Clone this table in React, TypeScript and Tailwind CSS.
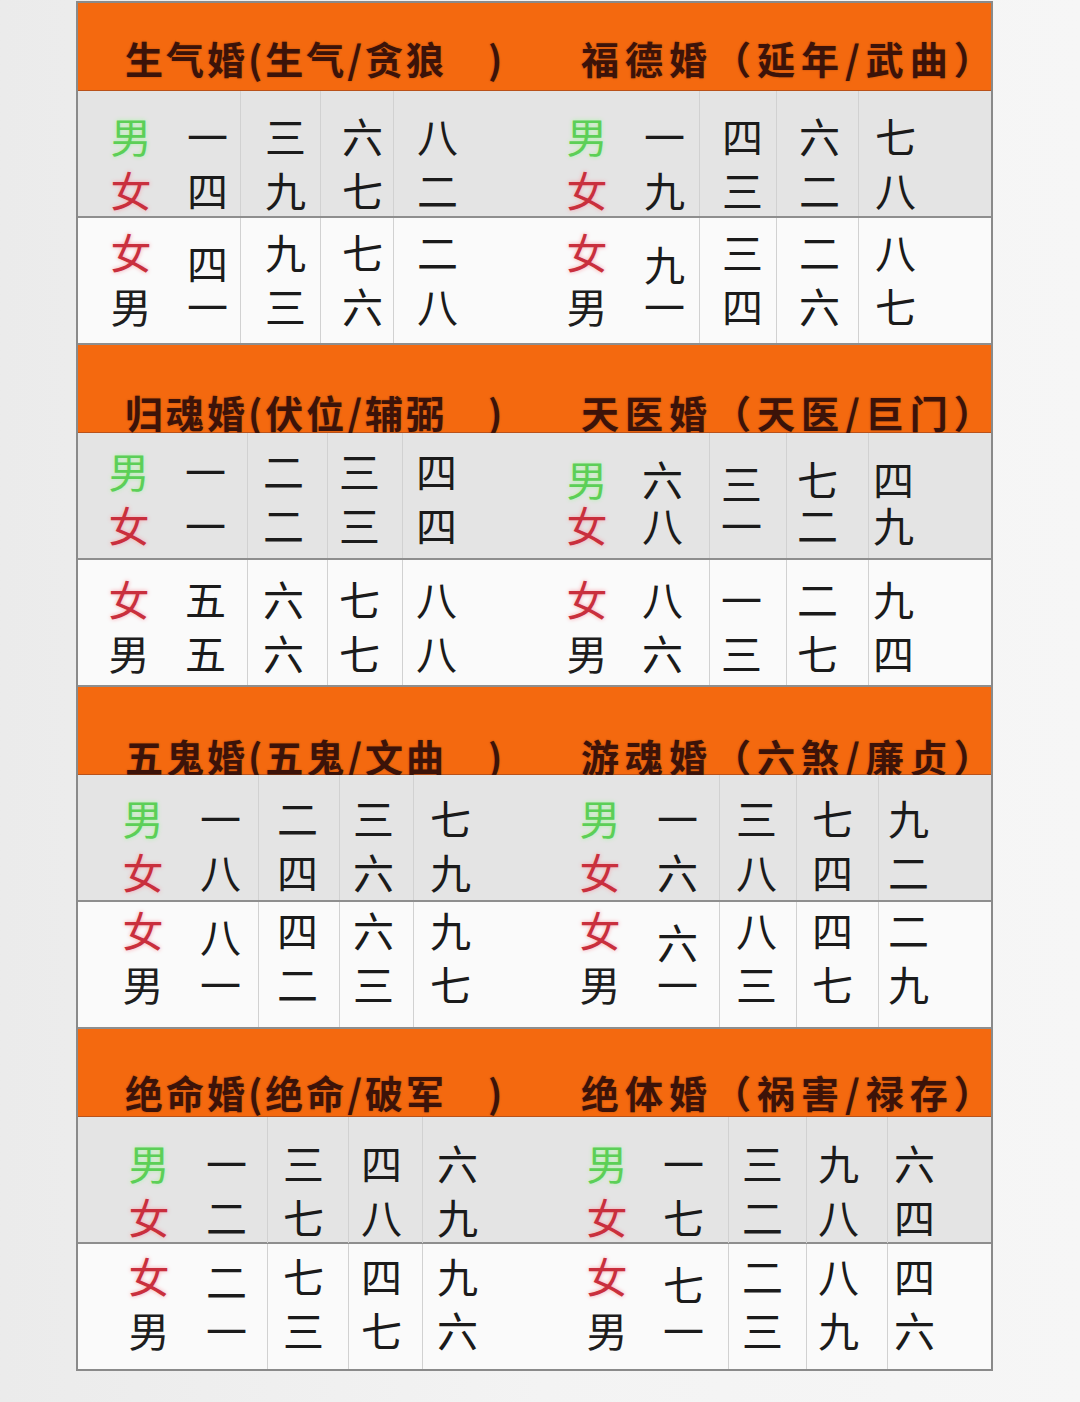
import React from "react";

type RowData = {
  pt: string;
  L: [string, string];
  R: [string, string];
  shift: Record<string, string>;
};

type Section = {
  left: string;
  right: string;
  headPt: string;
  grid: string;
  pl: string[];
  gray: RowData;
  white: RowData;
};

const SECTIONS: Section[] = [
  {
    left: "生气婚(生气/贪狼　)",
    right: "福德婚（延年/武曲）",
    headPt: "pt-[36px]",
    grid: "grid-cols-[28px_50px_84px_80px_73px_169px_50px_87px_77px_82px_1fr]",
    pl: ["pl-[31px]", "pl-[24px]", "pl-[21px]", "pl-[23px]", "pl-[32px]", "pl-[22px]", "pl-[22px]", "pl-[16px]"],
    gray: { pt: "pt-[17px]", L: ["男一三六八", "女四九七二"], R: ["男一四六七", "女九三二八"], shift: {} },
    white: {
      pt: "pt-[6px]",
      L: ["女四九七二", "男一三六八"],
      R: ["女九三二八", "男一四六七"],
      shift: { L1: "translate-y-[11px]", R1: "translate-y-[12px]" },
    },
  },
  {
    left: "归魂婚(伏位/辅弼　)",
    right: "天医婚（天医/巨门）",
    headPt: "pt-[48px]",
    grid: "grid-cols-[26px_50px_93px_80px_75px_160px_50px_97px_77px_82px_1fr]",
    pl: ["pl-[31px]", "pl-[15px]", "pl-[11px]", "pl-[13px]", "pl-[30px]", "pl-[11px]", "pl-[10px]", "pl-[4px]"],
    gray: {
      pt: "pt-[10px]",
      L: ["男一二三四", "女一二三四"],
      R: ["男六三七四", "女八一二九"],
      shift: {
        R0: "translate-y-[8px]",
        R1: "translate-y-[8px]",
        R2: "translate-y-[12px]",
        R3: "translate-y-[8px]",
        R4: "translate-y-[8px]",
      },
    },
    white: { pt: "pt-[11px]", L: ["女五六七八", "男五六七八"], R: ["女八一二九", "男六三七四"], shift: {} },
  },
  {
    left: "五鬼婚(五鬼/文曲　)",
    right: "游魂婚（六煞/廉贞）",
    headPt: "pt-[50px]",
    grid: "grid-cols-[40px_50px_90px_81px_74px_162px_50px_94px_77px_82px_1fr]",
    pl: ["pl-[32px]", "pl-[18px]", "pl-[13px]", "pl-[16px]", "pl-[32px]", "pl-[16px]", "pl-[15px]", "pl-[9px]"],
    gray: { pt: "pt-[15px]", L: ["男一二三七", "女八四六九"], R: ["男一三七九", "女六八四二"], shift: {} },
    white: {
      pt: "pt-[0px]",
      L: ["女八四六九", "男一二三七"],
      R: ["女六八四二", "男一三七九"],
      shift: { L1: "translate-y-[6px]", R1: "translate-y-[12px]" },
    },
  },
  {
    left: "绝命婚(绝命/破军　)",
    right: "绝体婚（祸害/禄存）",
    headPt: "pt-[44px]",
    grid: "grid-cols-[46px_50px_93px_81px_74px_160px_50px_96px_78px_81px_1fr]",
    pl: ["pl-[32px]", "pl-[15px]", "pl-[12px]", "pl-[14px]", "pl-[31px]", "pl-[13px]", "pl-[11px]", "pl-[6px]"],
    gray: { pt: "pt-[18px]", L: ["男一三四六", "女二七八九"], R: ["男一三九六", "女七二八四"], shift: {} },
    white: {
      pt: "pt-[4px]",
      L: ["女二七四九", "男一三七六"],
      R: ["女七二八四", "男一三九六"],
      shift: { L1: "translate-y-[5px]", R1: "translate-y-[8px]" },
    },
  },
];

function labelColor(ch: string, kind: "gray" | "white") {
  if (ch === "女") return "text-[#c92f3d] [text-shadow:0_0_4px_#f7a5ad]";
  if (kind === "gray") return "text-[#5ccf57] [text-shadow:0_0_4px_#aef3a8]";
  return "text-[#1e1e1e]";
}

function Row({ sec, kind, last }: { sec: Section; kind: "gray" | "white"; last: boolean }) {
  const r = sec[kind];
  const bg = kind === "gray" ? "bg-[#e4e4e4]" : "bg-[#fafafa]";
  const h = last ? "h-[125px]" : "h-[127px] border-b-2 border-[#8e8e8e]";
  const cells: React.ReactNode[] = [<div key="lead" />];
  (["L", "R"] as const).forEach((half) => {
    const l1 = Array.from(r[half][0]);
    const l2 = Array.from(r[half][1]);
    for (let i = 0; i < 5; i++) {
      const isLabel = i === 0;
      const border = i >= 2 ? "border-l border-[#d1d1d1]" : "";
      const plc = isLabel ? "justify-center" : sec.pl[(half === "L" ? 0 : 4) + i - 1];
      const lines = [l1[i], l2[i]];
      cells.push(
        <div key={half + i} className={`flex flex-col ${r.pt} ${border}`}>
          {lines.map((ch, li) => {
            const sh = li === 0 && r.shift[half + i] ? r.shift[half + i] : "";
            const color = isLabel ? labelColor(ch, kind) : "text-[#1b1b1b]";
            return (
              <div key={li} className={`flex h-[54px] items-center ${plc}`}>
                <span className={`block h-[41px] text-[41px] leading-[41px] ${color} ${sh}`}>{ch}</span>
              </div>
            );
          })}
        </div>
      );
    }
  });
  return <div className={`grid ${sec.grid} ${h} ${bg}`}>{cells}</div>;
}

function Header({ sec }: { sec: Section }) {
  const body = sec.right.slice(0, -1);
  const tail = sec.right.slice(-1);
  return (
    <div
      className={`flex h-[88px] items-start border-b border-[#b9521a] bg-[#f4690f] pl-[47px] ${sec.headPt} text-[38px] font-bold leading-[38px] text-[#3c1309] [text-shadow:0_0_2px_rgba(60,20,10,0.35)]`}
    >
      <span className="w-[456px] shrink-0 whitespace-nowrap tracking-[3px]">{sec.left}</span>
      <span className="whitespace-nowrap">
        <span className="tracking-[6px]">{body}</span>
        <span>{tail}</span>
      </span>
    </div>
  );
}

export default function App() {
  return (
    <div className="min-h-[1402px] w-[1080px] bg-gradient-to-r from-[#ebebeb] via-[#f3f3f3] to-[#f6f6f6] pt-[1px] font-['Noto_Sans_CJK_SC','Noto_Sans',sans-serif]">
      <div className="ml-[76px] w-[917px] overflow-hidden border-2 border-[#8a8a8a]">
        {SECTIONS.map((sec, idx) => (
          <div key={idx} className="flex flex-col">
            <Header sec={sec} />
            <Row sec={sec} kind="gray" last={false} />
            <Row sec={sec} kind="white" last={idx === SECTIONS.length - 1} />
          </div>
        ))}
      </div>
    </div>
  );
}
